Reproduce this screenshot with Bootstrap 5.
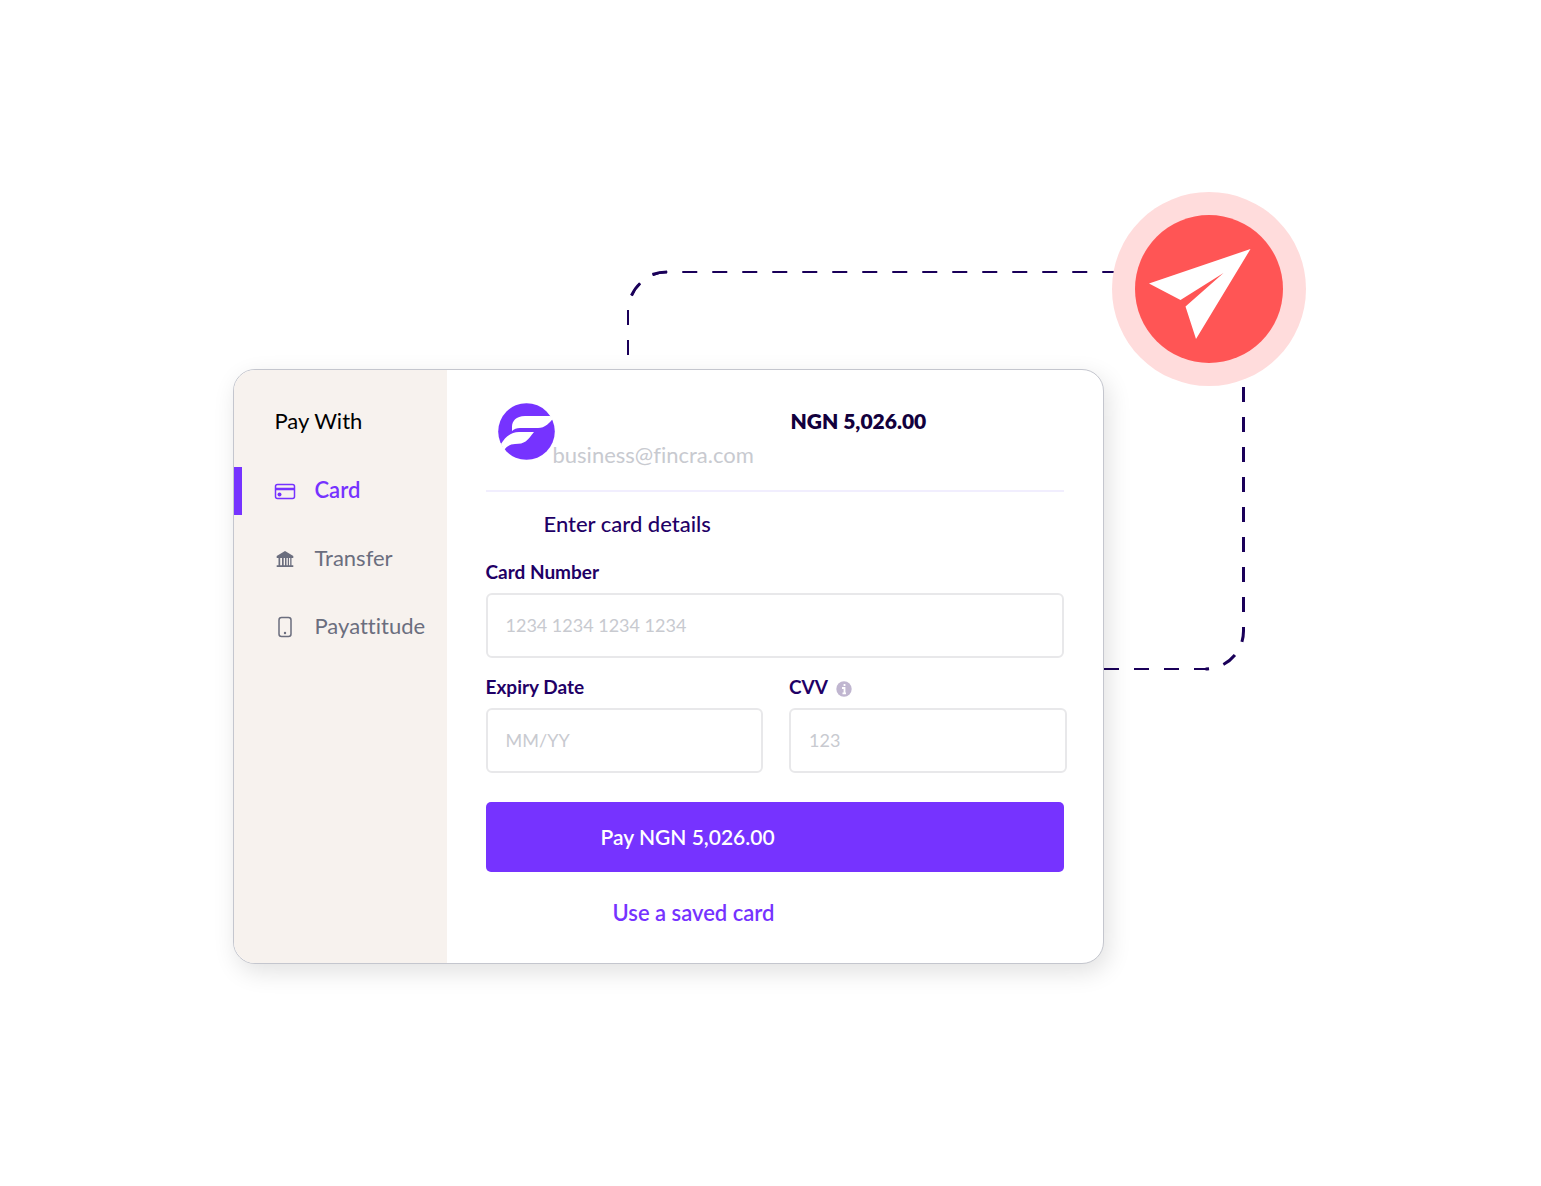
<!DOCTYPE html>
<html lang="en">
<head>
<meta charset="utf-8">
<meta name="viewport" content="width=device-width, initial-scale=1">
<title>Fincra checkout</title>
<link href="https://cdn.jsdelivr.net/npm/bootstrap@5.3.0/dist/css/bootstrap.min.css" rel="stylesheet">
<style>
  :root { --navy: #1f0066; --violet: #7633ff; --slate: #6b6e7e; --mist: #c8cad0; }
  body { font-family: Lato, "Open Sans", sans-serif; font-size: 22px; line-height: 32px; font-variant-ligatures: none; color: var(--navy); background: #fff; }
  .stage { max-width: 1076px; padding-top: 369px; padding-bottom: 96px; }
  .decor { position: absolute; left: 0; top: 192px; width: 1074px; height: 772px; }
  .checkout { max-width: 871px; border: 1px solid #c4c6ce; border-radius: 22px; box-shadow: 4px 8px 24px rgba(0,0,0,.12); }
  .methods { flex: 0 0 213px; background: #f7f2ee; padding-top: 35px; }
  .methods h1 { font-size: 22px; line-height: 32px; color: #000; padding-left: 41px; margin-bottom: 30px; font-weight: 400; }
  .method-list { gap: 20px; }
  .method { height: 48px; padding-left: 32px; border-left: 8px solid transparent; color: var(--slate); gap: 19px; }
  .method svg { width: 22px; height: 22px; flex: none; }
  .method span { padding-bottom: 2px; }
  .method.active { border-left-color: var(--violet); color: var(--violet); font-weight: 600; }
  .pane { padding: 33px 39px 34px 39px; }
  .top { height: 89px; border-bottom: 2px solid #f1eefe; }
  .payee { flex: 0 0 305px; padding-left: 12px; }
  .payee svg { width: 57px; height: 57px; flex: none; }
  .payee span { margin-top: 36px; margin-left: -2px; color: var(--mist); }
  .amount { margin-top: 2px; font-size: 21px; font-weight: 800; color: #12003d; }
  .pane h2 { font-size: 22px; line-height: 32px; font-weight: 500; margin: 16px 0 19px; padding-left: 58px; }
  .pane label { font-size: 19px; line-height: 26px; font-weight: 700; }
  .pane .form-control { height: 65px; border: 2px solid #e8e8ea; border-radius: 6px; padding: 0 18px 2px; font-size: 18px; color: var(--navy); margin-top: 8px; }
  .pane .form-control::placeholder { color: var(--mist); }
  .pair { gap: 26px; margin: 16px -3px 29px 0; }
  .pay { height: 70px; background: var(--violet); color: #fff; font-size: 21px; font-weight: 600; border: 0; border-radius: 5px; padding-left: 115px; }
  .pay:hover { background: #6425e6; color: #fff; }
  .saved { color: var(--violet); font-weight: 600; margin: 25px 0 0 127px; }
  .info { width: 16px; height: 16px; }
</style>
</head>
<body>
<main class="stage position-relative mx-auto">
  <svg class="decor" viewBox="233 192 1074 772" aria-hidden="true">
    <g fill="none" stroke="#1a0059" stroke-dasharray="15 15">
      <path stroke-width="2" d="M628 355V312A40 40 0 0 1 668 272H1120"/>
      <path stroke-width="3" d="M1243.500 387V631A38 38 0 0 1 1205.500 669"/>
      <path stroke-width="2" d="M1104 669H1209"/>
    </g>
    <path d="M631.500 295.500Q635 288 640 283.500M652.500 274.500Q659 272 667 272" fill="none" stroke="#1a0059" stroke-width="3"/>
    <circle cx="1209" cy="289" r="97" fill="#ffdcdc"/>
    <circle cx="1209" cy="289" r="74" fill="#ff5555"/>
    <path d="M1149 283.500L1250.500 249L1196 339L1185.500 306.500L1223.500 273L1180.500 300Z" fill="#fff"/>
  </svg>

  <section class="checkout position-relative d-flex bg-white overflow-hidden">
    <nav class="methods" aria-label="Payment methods">
      <h1>Pay With</h1>
      <div class="method-list d-flex flex-column">
        <a class="method active d-flex align-items-center text-decoration-none" href="#card" aria-current="page">
          <svg viewBox="0 0 22 22" aria-hidden="true"><rect x="1.500" y="4.500" width="19" height="14" rx="2" fill="none" stroke="currentColor" stroke-width="1.500"/><path d="M1.500 9H20.500" stroke="currentColor" stroke-width="2.500"/><circle cx="5.500" cy="14.500" r="2" fill="currentColor"/></svg>
          <span>Card</span></a>
        <a class="method d-flex align-items-center text-decoration-none" href="#transfer">
          <svg viewBox="0 0 22 22" aria-hidden="true"><path fill="currentColor" d="M11 3L19.300 8V10H17.500V17.300H19.300V19H2.700V17.300H4.500V10H2.700V8ZM6.200 10V17.300H8V10ZM9.700 10V17.300H11V10ZM12.500 10V17.300H13.800V10ZM15 10V17.300H16.200V10Z" fill-rule="evenodd"/></svg>
          <span>Transfer</span></a>
        <a class="method d-flex align-items-center text-decoration-none" href="#payattitude">
          <svg viewBox="0 0 22 22" aria-hidden="true"><rect x="5" y="1.500" width="12" height="19" rx="2.500" fill="none" stroke="currentColor" stroke-width="1.500"/><circle cx="11" cy="17" r="1.200" fill="currentColor"/></svg>
          <span>Payattitude</span></a>
      </div>
    </nav>

    <form class="pane flex-grow-1" id="card">
      <header class="top d-flex align-items-start">
        <div class="payee d-flex align-items-start">
          <svg viewBox="0 0 57 57" role="img" aria-label="Fincra"><circle cx="28.500" cy="28.500" r="28.300" fill="#7633ff"/><path fill="#fff" d="M52 13H27C18 13 14 18 14 24V28Q17 25 22 25H40C47 25 52 20 56 14ZM36 29H21C13 29 7 34 3 41L6 47Q10 41 17 41C27 41 29 38 36 29Z"/></svg>
          <span>business@fincra.com</span>
        </div>
        <div class="amount">NGN 5,026.00</div>
      </header>

      <h2>Enter card details</h2>
      <div>
        <label class="d-block" for="number">Card Number</label>
        <input class="form-control" id="number" type="text" inputmode="numeric" placeholder="1234 1234 1234 1234">
      </div>
      <div class="pair d-flex">
        <div class="flex-fill">
          <label class="d-block" for="expiry">Expiry Date</label>
          <input class="form-control" id="expiry" type="text" placeholder="MM/YY">
        </div>
        <div class="flex-fill">
          <label class="d-flex align-items-center gap-2" for="cvv">CVV
            <svg class="info mt-1" viewBox="0 0 16 16" aria-hidden="true"><circle cx="8" cy="8" r="7.700" fill="#c0b6d0"/><path d="M8.500 3V5M6 7H8.500V12.500M6.500 12.300H10" stroke="#fff" stroke-width="1.800" fill="none"/></svg>
          </label>
          <input class="form-control" id="cvv" type="text" inputmode="numeric" placeholder="123">
        </div>
      </div>
      <button class="pay btn w-100 text-start" type="submit">Pay NGN 5,026.00</button>
      <a class="saved d-inline-block text-decoration-none" href="#saved">Use a saved card</a>
    </form>
  </section>
</main>
<script src="https://cdn.jsdelivr.net/npm/bootstrap@5.3.0/dist/js/bootstrap.bundle.min.js"></script>
</body>
</html>
